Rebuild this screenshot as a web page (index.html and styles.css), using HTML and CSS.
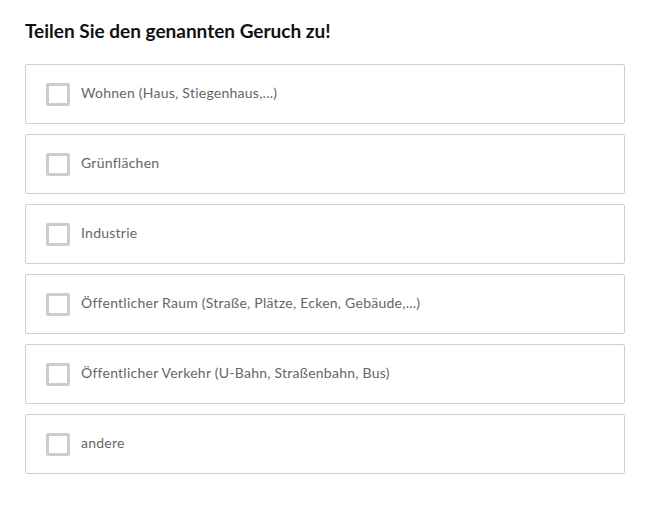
FILE: index.html
```html
<!DOCTYPE html>
<html lang="de">
<head>
<meta charset="utf-8">
<link rel="stylesheet" href="styles.css">
</head>
<body>
<div class="page">
  <h1 class="title">Teilen Sie den genannten Geruch zu!</h1>
  <div class="options">
    <label class="option"><span class="box"></span><span class="text">Wohnen (Haus, Stiegenhaus,...)</span></label>
    <label class="option"><span class="box"></span><span class="text">Grünflächen</span></label>
    <label class="option"><span class="box"></span><span class="text">Industrie</span></label>
    <label class="option"><span class="box"></span><span class="text">Öffentlicher Raum (Straße, Plätze, Ecken, Gebäude,...)</span></label>
    <label class="option"><span class="box"></span><span class="text">Öffentlicher Verkehr (U-Bahn, Straßenbahn, Bus)</span></label>
    <label class="option"><span class="box"></span><span class="text">andere</span></label>
  </div>
</div>
</body>
</html>
```
FILE: styles.css
```css
html, body {
  margin: 0;
  padding: 0;
  background: #ffffff;
}
.page {
  padding: 19px 27px 0 25px;
  font-family: Lato, "Open Sans", sans-serif;
}
.title {
  margin: 0 0 21px 0;
  font-size: 19px;
  line-height: 24px;
  font-weight: 700;
  color: #111111;
}
.options {
  display: flex;
  flex-direction: column;
  gap: 10px;
}
.option {
  display: flex;
  align-items: center;
  height: 60px;
  box-sizing: border-box;
  border: 1px solid #cfcfcf;
  border-radius: 2px;
  padding-left: 20px;
}
.box {
  width: 24px;
  height: 23px;
  box-sizing: border-box;
  border: 3px solid #cccccc;
  border-radius: 2px;
  margin-right: 11px;
  flex: none;
}
.text {
  font-size: 14px;
  line-height: 18px;
  padding-bottom: 2px;
  color: #666666;
  letter-spacing: 0.25px;
}
```
